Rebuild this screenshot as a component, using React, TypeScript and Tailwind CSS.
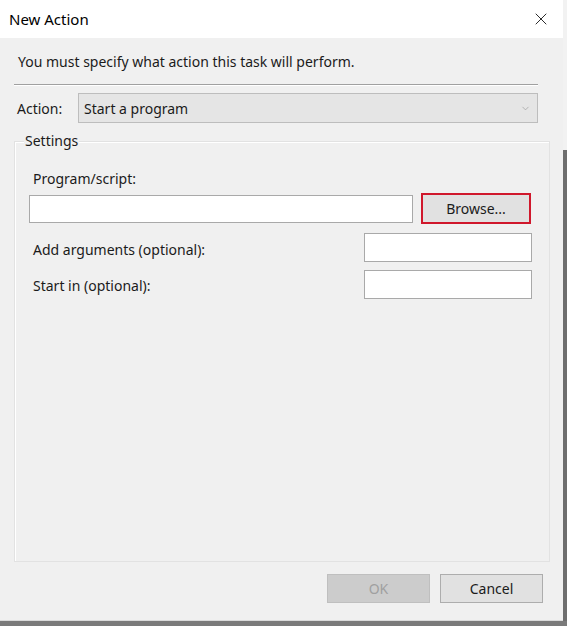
import { X, ChevronDown } from "lucide-react";

const font = { fontFamily: '"Noto Sans", "Open Sans", sans-serif' };

export default function App() {
  return (
    <div className="w-[567px] h-[626px] flex flex-col bg-[#7a7a7a] text-[#1b1b1b]" style={font}>
      <div className="flex h-[621px]">
        <div className="w-[563px] h-[621px] flex flex-col bg-[#f0f0f0] border-b border-[#d9d9d9]">
          {/* title bar */}
          <div className="h-[38px] bg-white flex items-center justify-between pl-[9px] pr-[12px] shrink-0">
            <span className="text-[15px] text-black">New Action</span>
            <X size={20} strokeWidth={1} className="text-black" />
          </div>

          <div className="flex-1 flex flex-col px-[14px]">
            <div className="h-[47px] flex items-center pl-[4px] text-[14px] border-b border-[#a0a0a0] shadow-[0_1px_0_#ffffff] mr-[11px]">
              You must specify what action this task will perform.
            </div>

            <div className="flex items-center mt-[8px] h-[30px]">
              <span className="w-[64px] pl-[3px] text-[14px]">Action:</span>
              <div className="w-[460px] h-[30px] bg-[#e5e5e5] border border-[#bdbdbd] flex items-center justify-between pl-[5px] pr-[6px] text-[14px]">
                <span>Start a program</span>
                <ChevronDown size={11} strokeWidth={1.5} className="text-[#9a9a9a]" />
              </div>
            </div>

            {/* settings group */}
            <div className="relative mt-[18px] h-[421px] w-[536px] border border-[#e2e2e2] shadow-[inset_1px_1px_0_#ffffff]">
              <span className="absolute top-[-10px] left-[9px] px-[1px] bg-[#f0f0f0] text-[14px] leading-[18px]">Settings</span>
              <div className="flex flex-col pl-[18px] pr-[15px] pt-[28px]">
                <span className="text-[14px] leading-[18px]">Program/script:</span>
                <div className="flex items-center mt-[5px] gap-[8px]">
                  <div className="w-[384px] h-[28px] bg-white border border-[#a9a9a9] ml-[-4px]" />
                  <div className="w-[110px] h-[31px] border-[2px] border-[#d0182c] bg-[#e1e1e1] flex items-center justify-center text-[14px]">
                    Browse...
                  </div>
                </div>
                <div className="flex items-center justify-between mt-[9px]">
                  <span className="text-[14px] mt-[3px]">Add arguments (optional):</span>
                  <div className="w-[168px] h-[29px] bg-white border border-[#a9a9a9] mr-[2px]" />
                </div>
                <div className="flex items-center justify-between mt-[8px]">
                  <span className="text-[14px] mt-[1px]">Start in (optional):</span>
                  <div className="w-[168px] h-[29px] bg-white border border-[#a9a9a9] mr-[2px]" />
                </div>
              </div>
            </div>

            <div className="flex justify-end gap-[10px] mt-[12px] mr-[6px]">
              <div className="w-[103px] h-[29px] bg-[#cccccc] border border-[#bfbfbf] flex items-center justify-center text-[14px] text-[#a0a0a0]">
                OK
              </div>
              <div className="w-[103px] h-[29px] bg-[#e1e1e1] border border-[#adadad] flex items-center justify-center text-[14px]">
                Cancel
              </div>
            </div>
          </div>
        </div>
        <div className="flex-1 flex flex-col">
          <div className="h-[150px] bg-[#f2f2f2]" />
          <div className="flex-1 bg-[#6e6e6e]" />
        </div>
      </div>
    </div>
  );
}
